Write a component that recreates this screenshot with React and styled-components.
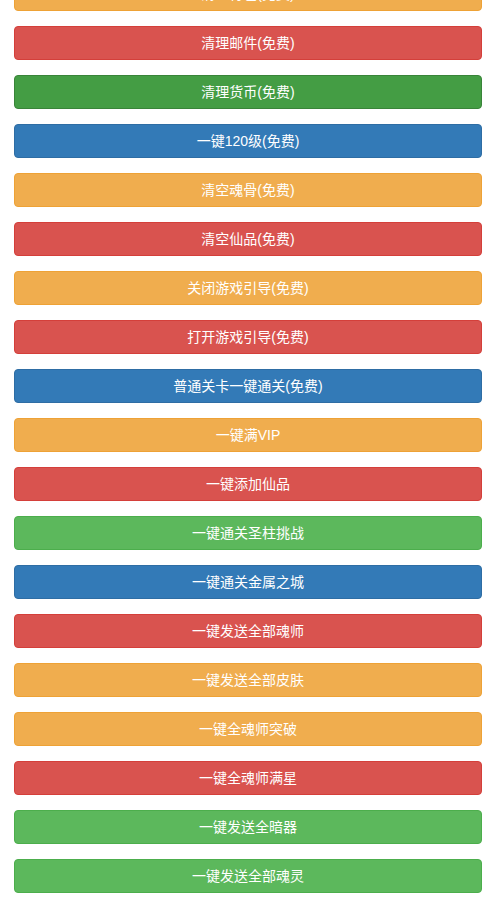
import React from 'react'
import styled, { createGlobalStyle } from 'styled-components'

const GlobalStyle = createGlobalStyle`
  html, body {
    margin: 0;
    padding: 0;
    background: #fff;
  }
  body {
    font-family: "Liberation Sans", "Noto Sans CJK SC", Arial, sans-serif;
    font-size: 14px;
    line-height: 1.42857143;
    color: #333;
  }
`

const palette = {
  warning: { bg: '#f0ad4e', border: '#eea236' },
  danger: { bg: '#d9534f', border: '#d43f3a' },
  success: { bg: '#5cb85c', border: '#4cae4c' },
  successActive: { bg: '#449d44', border: '#398439' },
  primary: { bg: '#337ab7', border: '#2e6da4' },
}

const Page = styled.div`
  padding: 0 13px 0 14px;
  margin-top: -23px;
`

const List = styled.div`
  display: flex;
  flex-direction: column;
  gap: 15px;
`

const Button = styled.button`
  display: block;
  width: 100%;
  box-sizing: border-box;
  padding: 6px 12px;
  font-family: inherit;
  font-size: 14px;
  line-height: 1.42857143;
  text-align: center;
  color: #fff;
  background: ${p => palette[p.$variant].bg};
  border: 1px solid ${p => palette[p.$variant].border};
  border-radius: 4px;
  cursor: pointer;
`

const actions = [
  ['清理背包(免费)', 'warning'],
  ['清理邮件(免费)', 'danger'],
  ['清理货币(免费)', 'successActive'],
  ['一键120级(免费)', 'primary'],
  ['清空魂骨(免费)', 'warning'],
  ['清空仙品(免费)', 'danger'],
  ['关闭游戏引导(免费)', 'warning'],
  ['打开游戏引导(免费)', 'danger'],
  ['普通关卡一键通关(免费)', 'primary'],
  ['一键满VIP', 'warning'],
  ['一键添加仙品', 'danger'],
  ['一键通关圣柱挑战', 'success'],
  ['一键通关金属之城', 'primary'],
  ['一键发送全部魂师', 'danger'],
  ['一键发送全部皮肤', 'warning'],
  ['一键全魂师突破', 'warning'],
  ['一键全魂师满星', 'danger'],
  ['一键发送全暗器', 'success'],
  ['一键发送全部魂灵', 'success'],
]

const App = () => {
  return (
    <>
      <GlobalStyle />
      <Page>
        <List>
          {actions.map(([label, variant]) => (
            <Button key={label} $variant={variant}>{label}</Button>
          ))}
        </List>
      </Page>
    </>
  )
}

export default App
